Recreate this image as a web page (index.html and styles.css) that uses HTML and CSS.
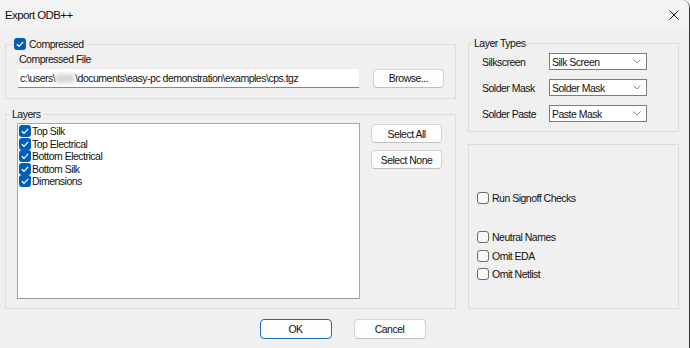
FILE: index.html
```html
<!DOCTYPE html>
<html lang="en">
<head>
    <meta charset="UTF-8">
    <title>Export ODB++</title>
    <link rel="stylesheet" href="styles.css">
</head>
<body>
    <div class="window">
        <div class="titlebar">
            <span class="title">Export ODB++</span>
            <svg class="close" width="10" height="10" viewBox="0 0 10 10"><path d="M0.5 0.5 L9.5 9.5 M9.5 0.5 L0.5 9.5" stroke="#1b1b1b" stroke-width="1" fill="none"/></svg>
        </div>

        <div class="content">
            <div class="col-left">
                <fieldset class="group group-compressed">
                    <legend class="legend-check">
                        <span class="box checked"><svg width="12" height="12" viewBox="0 0 12 12"><path d="M2.8 6.2 L5 8.3 L9.2 3.9" stroke="#fff" stroke-width="1.2" fill="none"/></svg></span>
                        Compressed
                    </legend>
                    <div class="compressed-body">
                        <div class="field-label">Compressed File</div>
                        <div class="file-row">
                            <div class="textbox">c:\users\<span class="blur"></span>\documents\easy-pc demonstration\examples\cps.tgz</div>
                            <button class="btn">Browse...</button>
                        </div>
                    </div>
                </fieldset>

                <fieldset class="group group-layers">
                    <legend class="legend-layers">Layers</legend>
                    <div class="layers-row">
                        <ul class="listbox">
                            <li><span class="box checked"><svg width="12" height="12" viewBox="0 0 12 12"><path d="M2.8 6.2 L5 8.3 L9.2 3.9" stroke="#fff" stroke-width="1.2" fill="none"/></svg></span>Top Silk</li>
                            <li><span class="box checked"><svg width="12" height="12" viewBox="0 0 12 12"><path d="M2.8 6.2 L5 8.3 L9.2 3.9" stroke="#fff" stroke-width="1.2" fill="none"/></svg></span>Top Electrical</li>
                            <li><span class="box checked"><svg width="12" height="12" viewBox="0 0 12 12"><path d="M2.8 6.2 L5 8.3 L9.2 3.9" stroke="#fff" stroke-width="1.2" fill="none"/></svg></span>Bottom Electrical</li>
                            <li><span class="box checked"><svg width="12" height="12" viewBox="0 0 12 12"><path d="M2.8 6.2 L5 8.3 L9.2 3.9" stroke="#fff" stroke-width="1.2" fill="none"/></svg></span>Bottom Silk</li>
                            <li><span class="box checked"><svg width="12" height="12" viewBox="0 0 12 12"><path d="M2.8 6.2 L5 8.3 L9.2 3.9" stroke="#fff" stroke-width="1.2" fill="none"/></svg></span>Dimensions</li>
                        </ul>
                        <div class="btn-stack">
                            <button class="btn">Select All</button>
                            <button class="btn">Select None</button>
                        </div>
                    </div>
                </fieldset>
            </div>

            <div class="col-right">
                <fieldset class="group group-types">
                    <legend class="legend-types">Layer Types</legend>
                    <div class="types-body">
                        <div class="type-row">
                            <span class="type-label">Silkscreen</span>
                            <div class="select">Silk Screen<svg width="8" height="5" viewBox="0 0 8 5"><path d="M0.5 0.5 L4 4 L7.5 0.5" stroke="#8a8a8a" stroke-width="1" fill="none"/></svg></div>
                        </div>
                        <div class="type-row">
                            <span class="type-label">Solder Mask</span>
                            <div class="select">Solder Mask<svg width="8" height="5" viewBox="0 0 8 5"><path d="M0.5 0.5 L4 4 L7.5 0.5" stroke="#8a8a8a" stroke-width="1" fill="none"/></svg></div>
                        </div>
                        <div class="type-row">
                            <span class="type-label">Solder Paste</span>
                            <div class="select">Paste Mask<svg width="8" height="5" viewBox="0 0 8 5"><path d="M0.5 0.5 L4 4 L7.5 0.5" stroke="#8a8a8a" stroke-width="1" fill="none"/></svg></div>
                        </div>
                    </div>
                </fieldset>

                <div class="group group-options">
                    <div class="opt-row"><span class="box"></span>Run Signoff Checks</div>
                    <div class="opt-row spaced"><span class="box"></span>Neutral Names</div>
                    <div class="opt-row"><span class="box"></span>Omit EDA</div>
                    <div class="opt-row"><span class="box"></span>Omit Netlist</div>
                </div>
            </div>
        </div>

        <div class="footer">
            <button class="btn btn-wide default">OK</button>
            <button class="btn btn-wide">Cancel</button>
        </div>
    </div>
</body>
</html>
```

FILE: styles.css
```css
body {
    margin: 0;
    background: #f0f0f0;
    font-family: 'Liberation Sans', Arial, sans-serif;
    font-size: 10.5px;
    letter-spacing: -0.5px;
    color: #111;
}

.window {
    width: 690px;
    height: 348px;
    box-sizing: border-box;
    display: flex;
    flex-direction: column;
    background: #f0f0f0;
    border-right: 1px solid #3a3a3a;
    border-top-right-radius: 8px;
    overflow: hidden;
}

.titlebar {
    height: 30px;
    flex: none;
    display: flex;
    align-items: center;
    justify-content: space-between;
    padding: 0 10px 0 5px;
    background: #f3f3f3;
    font-size: 11.5px;
    letter-spacing: -0.6px;
}

.content {
    height: 279px;
    display: flex;
    gap: 12px;
    padding-left: 5px;
}

.col-left {
    width: 451px;
    display: flex;
    flex-direction: column;
}

.col-right {
    width: 211px;
    display: flex;
    flex-direction: column;
}

.group {
    margin: 0;
    padding: 0;
    min-width: 0;
    border: 1px solid #dcdcdc;
}

legend {
    line-height: 14px;
    padding: 0 2px;
}

/* Compressed */

.group-compressed {
    margin-top: 7px;
}

.legend-check {
    display: flex;
    align-items: center;
    gap: 3px;
    margin-left: 7px;
    padding: 0 3px 0 1px;
}

.compressed-body {
    padding: 1px 10px 10px 11px;
}

.field-label {
    line-height: 14px;
    margin-left: 2px;
}

.file-row {
    display: flex;
    align-items: center;
    gap: 13px;
    margin-top: 2px;
}

.textbox {
    width: 343px;
    height: 20px;
    box-sizing: border-box;
    background: #fff;
    border: 1px solid #ebebeb;
    border-bottom-color: #868686;
    border-radius: 2px;
    padding-left: 2px;
    line-height: 18px;
    white-space: nowrap;
    overflow: hidden;
}

.blur {
    display: inline-block;
    width: 20px;
    height: 9px;
    vertical-align: -1px;
    background: #d6d6d6;
    border-radius: 4px;
    filter: blur(2px);
}

/* Buttons */

.btn {
    width: 71px;
    height: 19px;
    padding: 0;
    font: inherit;
    letter-spacing: inherit;
    color: #111;
    background: #fdfdfd;
    border: 1px solid #d3d3d3;
    border-bottom-color: #bfbfbf;
    border-radius: 4px;
}

.btn-wide {
    width: 72px;
    height: 20px;
}

.btn.default {
    border-color: #1a6dbc;
}

/* Layers */

.group-layers {
    margin-top: 8px;
    flex: 1;
}

.legend-layers {
    margin-left: 4px;
}

.layers-row {
    display: flex;
    gap: 11px;
    padding: 2px 0 0 11px;
}

.listbox {
    width: 343px;
    height: 176px;
    box-sizing: border-box;
    margin: 0;
    padding: 1px 0 0 1px;
    list-style: none;
    background: #fff;
    border: 1px solid #a7a7a7;
    border-bottom-color: #9a9a9a;
}

.listbox li {
    height: 12.5px;
    display: flex;
    align-items: center;
    gap: 1px;
    white-space: nowrap;
}

.btn-stack {
    display: flex;
    flex-direction: column;
    gap: 7px;
    padding-top: 1px;
}

/* Checkboxes */

.box {
    width: 12px;
    height: 12px;
    flex: none;
    box-sizing: border-box;
    border: 1px solid #6d6d6d;
    border-radius: 3px;
    background: #f7f7f7;
    display: flex;
}

.box.checked {
    border: none;
    background: #005fb8;
}

/* Layer types */

.group-types {
    margin-top: 6px;
}

.legend-types {
    margin-left: 3px;
}

.types-body {
    display: flex;
    flex-direction: column;
    gap: 9px;
    padding: 3px 0 9px 13px;
}

.type-row {
    display: flex;
    align-items: center;
    height: 17px;
}

.type-label {
    width: 67px;
}

.select {
    width: 98px;
    height: 17px;
    box-sizing: border-box;
    display: flex;
    align-items: center;
    justify-content: space-between;
    padding: 0 5px 0 2px;
    background: #fff;
    border: 1px solid #7c7c7c;
}

/* Options */

.group-options {
    margin-top: 12px;
    flex: 1;
    padding: 44px 0 0 8px;
}

.opt-row {
    height: 18.5px;
    display: flex;
    align-items: center;
    gap: 3px;
}

.opt-row.spaced {
    margin-top: 20.5px;
}

/* Footer */

.footer {
    display: flex;
    justify-content: center;
    gap: 22px;
    padding: 10px 4px 0 0;
}
```
